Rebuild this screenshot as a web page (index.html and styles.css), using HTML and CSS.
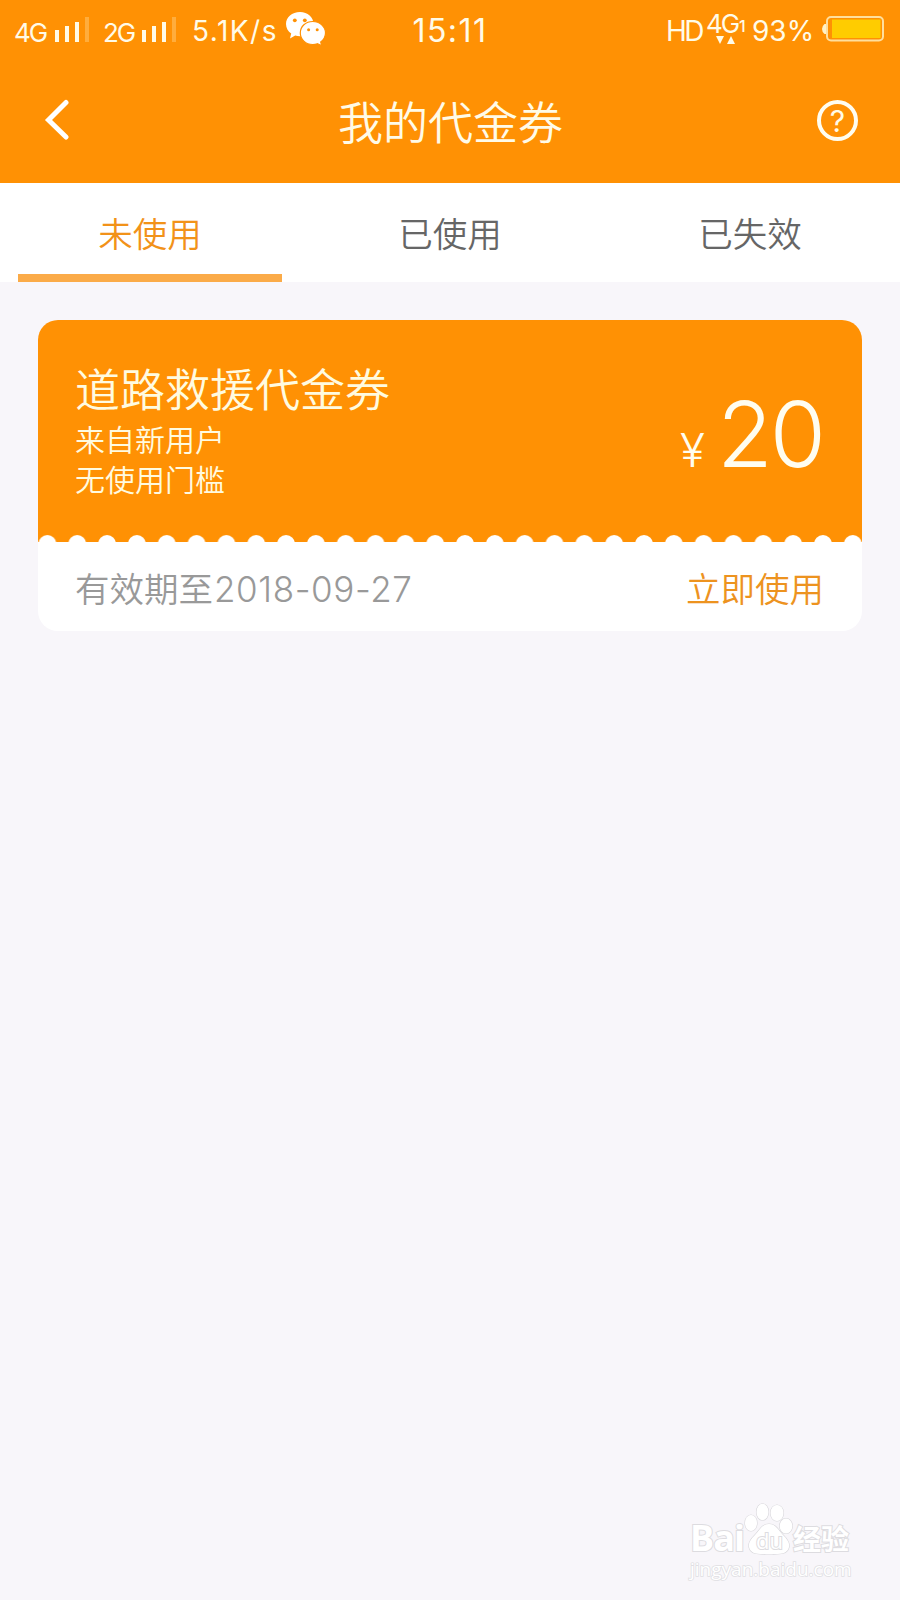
FILE: index.html
```
<!DOCTYPE html>
<html lang="zh-CN">
<head>
    <meta charset="UTF-8">
    <title>我的代金券</title>
    <link rel="stylesheet" href="styles.css">
</head>
<body>
<div class="top">
    <div class="status">
        <div class="status-left">
            <span class="net net-4g">4G</span>
            <svg class="signal" width="36" height="26" viewBox="0 0 36 26">
                <path fill="#fffbe8" d="M0 13h4v12H0zM10 9h4v16h-4zM20 5h4v20h-4z"/>
                <path fill="#ffad3d" d="M30 0h4v25h-4z"/>
            </svg>
            <span class="net net-2g">2G</span>
            <svg class="signal" width="36" height="26" viewBox="0 0 36 26">
                <path fill="#fffbe8" d="M0 13h4v12H0zM10 9h4v16h-4zM20 5h4v20h-4z"/>
                <path fill="#ffad3d" d="M30 0h4v25h-4z"/>
            </svg>
            <span class="speed">5.1K/s</span>
            <svg class="wechat" width="40" height="34" viewBox="0 0 40 34">
                <path fill="#fff" d="M14 0C6 0 0 5.3 0 12c0 4 2 7.300 5.200 9.500L4 26.500l5.200-3c1.500.5 3.100.7 4.800.7 7.700 0 13.500-5.400 13.500-12.200S21.700 0 14 0z"/>
                <path fill="#fff" stroke="#ff9104" stroke-width="1.200" d="M26.700 9.500c-7 0-12.400 4.900-12.400 11.400s5.400 11.600 12.400 11.600c1.700 0 3.300-.3 4.700-.8l4.400 2.200-1.100-4c2.800-2.100 4.800-5.400 4.800-9 0-6.500-5.800-11.400-12.800-11.400z"/>
                <g fill="#ff9104">
                    <circle cx="8.800" cy="8.300" r="1.900"/>
                    <circle cx="18.800" cy="8.300" r="1.900"/>
                    <circle cx="22.600" cy="17.800" r="1.500"/>
                    <circle cx="31.200" cy="17.800" r="1.500"/>
                </g>
            </svg>
        </div>
        <div class="clock">15:11</div>
        <div class="status-right">
            <span class="hd">HD</span>
            <span class="data">
                <span class="data-text">4G</span>
                <svg class="arrows" width="20" height="8" viewBox="0 0 20 8"><path fill="#fffbe8" d="M0 0h8L4 8zM15 0l4 8h-8z"/></svg>
            </span>
            <span class="sim">1</span>
            <span class="percent">93%</span>
            <svg class="battery" width="62" height="26" viewBox="0 0 62 26">
                <path fill="#fff2c8" d="M4 8v10H2.500Q0 16 0 13t2.500-5z"/>
                <rect x="5" y="1" width="56" height="23.500" rx="4" fill="none" stroke="#ffdf9e" stroke-width="2"/>
                <rect x="10" y="3.500" width="48.500" height="18.500" fill="#fc0"/>
            </svg>
        </div>
    </div>
    <div class="nav">
        <svg class="back" width="26" height="42" viewBox="0 0 26 42"><path fill="none" stroke="#fff" stroke-width="5" stroke-linecap="round" d="M22 3.500L4.500 21L22 38"/></svg>
        <h1 class="title">我的代金券</h1>
        <div class="help">?</div>
    </div>
</div>
<div class="tabs">
    <div class="tab active">未使用</div>
    <div class="tab">已使用</div>
    <div class="tab">已失效</div>
</div>
<div class="coupon">
    <div class="coupon-main">
        <div class="coupon-info">
            <h2 class="coupon-name">道路救援代金券</h2>
            <p>来自新用户</p>
            <p>无使用门槛</p>
        </div>
        <div class="price"><span class="yen">¥</span><span class="amount">20</span></div>
    </div>
    <svg class="teeth" width="824" height="8" viewBox="0 0 824 8">
        <defs>
            <pattern id="tooth" x="-5.500" width="29.830" height="8" patternUnits="userSpaceOnUse">
                <circle cx="14.900" cy="9" r="9" fill="#fff"/>
            </pattern>
        </defs>
        <rect width="824" height="8" fill="url(#tooth)"/>
    </svg>
    <div class="coupon-foot">
        <div class="expire">有效期至<span class="date">2018-09-27</span></div>
        <div class="use">立即使用</div>
    </div>
</div>
<div class="watermark">
    <div class="wm-logo">
        <span class="wm-bai">Bai</span>
        <span class="wm-paw">
            <svg width="50" height="54" viewBox="0 0 50 54">
                <g fill="#fff" stroke="#d8d7db" stroke-width="1.200">
                    <ellipse cx="8" cy="20" rx="6" ry="8"/>
                    <ellipse cx="19.500" cy="9" rx="6" ry="8.200"/>
                    <ellipse cx="34" cy="10" rx="6.500" ry="8"/>
                    <ellipse cx="43" cy="23" rx="6.300" ry="7.500"/>
                    <path d="M26 21c-7 0-9 6-14 11-4 4-7 8-6 12 2 8 10 7 20 7s18 1 20-7c1-4-2-8-6-12-5-5-7-11-14-11z"/>
                </g>
            </svg>
            <span class="wm-du">du</span>
        </span>
        <span class="wm-jy">经验</span>
    </div>
    <div class="wm-url">jingyan.baidu.com</div>
</div>
</body>
</html>
```
FILE: styles.css
```
* {
    box-sizing: border-box;
}
body {
    margin: 0;
    height: 1600px;
    display: flex;
    flex-direction: column;
    background: #f8f6fa;
    font-family: Inter, "Noto Sans CJK SC", sans-serif;
    font-weight: 350;
    overflow: hidden;
}
h1, h2, p {
    margin: 0;
    font-weight: 350;
}

/* status bar + title */
.top {
    height: 183px;
    background: #ff9104;
    color: #fffbe8;
}
.status {
    display: grid;
    grid-template-columns: 1fr 76px 1fr;
    height: 60px;
    line-height: 62px;
    font-size: 28px;
    font-weight: 400;
    white-space: nowrap;
}
.status-left, .status-right {
    display: flex;
    align-items: flex-start;
}
.status-left {
    padding-left: 14px;
}
.net {
    width: 41px;
    font-size: 26px;
    letter-spacing: -2px;
    line-height: 65px;
}
.net-2g {
    width: 39px;
}
.signal {
    margin-top: 16.500px;
    margin-right: 12px;
}
.speed {
    width: 96px;
    padding-left: 2px;
    letter-spacing: 1.500px;
}
.wechat {
    margin-top: 12px;
}
.clock {
    font-size: 32px;
    line-height: 62px;
    letter-spacing: 1.500px;
    text-align: center;
}
.status-right {
    justify-content: flex-end;
    padding-right: 16px;
}
.hd {
    width: 40px;
    letter-spacing: -2.500px;
}
.data {
    display: flex;
    flex-direction: column;
    width: 33px;
}
.data-text {
    height: 36px;
    line-height: 47px;
    font-size: 26px;
    letter-spacing: -2px;
}
.arrows {
    margin-left: 10px;
}
.sim {
    width: 13px;
    line-height: 53px;
    font-size: 16px;
    font-weight: 500;
}
.percent {
    width: 70px;
}
.battery {
    margin-top: 16px;
}
.nav {
    display: flex;
    justify-content: space-between;
    align-items: center;
    height: 120px;
    padding: 0 42px 0 44px;
}
.title {
    padding-top: 7px;
    font-size: 45px;
    line-height: 60px;
    margin-left: 14px;
}
.help {
    width: 41px;
    height: 41px;
    border: 4px solid #fffdf0;
    border-radius: 50%;
    font-size: 30px;
    font-weight: 400;
    line-height: 34px;
    text-align: center;
}

/* tabs */
.tabs {
    display: grid;
    grid-template-columns: repeat(3, 1fr);
    height: 99px;
    background: #fff;
}
.tab {
    height: 99px;
    margin: 0 18px;
    font-size: 34.500px;
    line-height: 104px;
    text-align: center;
    color: #666;
}
.active {
    color: #f29219;
    border-bottom: 8px solid #fbab48;
}

/* coupon */
.coupon {
    margin: 38px 38px 0;
    height: 311px;
    border-radius: 20px;
    background: #fff;
    overflow: hidden;
}
.coupon-main {
    display: flex;
    justify-content: space-between;
    height: 222px;
    padding: 42px 39px 0 37px;
    background: #ff9104;
    color: #fffbe0;
}
.coupon-name {
    font-size: 45px;
    line-height: 58px;
}
.coupon-info p {
    font-size: 30px;
    line-height: 40px;
}
.price {
    display: flex;
    align-items: baseline;
    line-height: 144px;
    color: #fffdf0;
    font-weight: 300;
}
.yen {
    margin-right: 12px;
    font-size: 46px;
}
.amount {
    font-size: 91px;
    letter-spacing: -3px;
}
.teeth {
    display: block;
    margin-top: -7px;
}
.coupon-foot {
    display: flex;
    justify-content: space-between;
    padding: 0 38px 0 37px;
    font-size: 34.500px;
    line-height: 93px;
}
.expire {
    color: #999;
}
.date {
    padding-left: 1px;
    font-size: 35px;
    font-weight: 300;
    letter-spacing: 0.600px;
}
.use {
    color: #ed931f;
}

/* watermark */
.watermark {
    width: 166px;
    margin: auto 44px 20px auto;
    color: #fff;
    -webkit-text-stroke: 2px #dddce0;
    paint-order: stroke fill;
}
.wm-logo {
    display: flex;
    align-items: flex-end;
    height: 54px;
    line-height: 34px;
}
.wm-bai {
    width: 53px;
    font: 700 36px/38px "Open Sans", sans-serif;
    letter-spacing: -1px;
}
.wm-paw {
    position: relative;
    width: 50px;
    height: 54px;
}
.wm-du {
    position: absolute;
    left: 13px;
    top: 24px;
    font: 400 22px/26px "Open Sans", sans-serif;
}
.wm-jy {
    font-size: 28px;
    font-weight: 700;
}
.wm-url {
    margin-top: 1px;
    font: 400 19px/22px "Open Sans", sans-serif;
    -webkit-text-stroke: 1.600px #e0dfe3;
}
```
